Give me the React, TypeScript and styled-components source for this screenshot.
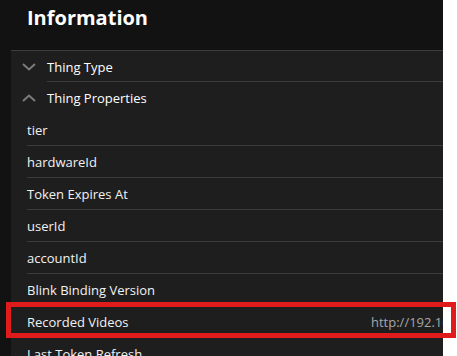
import styled, { createGlobalStyle } from 'styled-components';

const GlobalStyle = createGlobalStyle`
  html, body {
    margin: 0;
    padding: 0;
    background: #ffffff;
    overflow: hidden;
  }
  body {
    font-family: 'Open Sans', 'Noto Sans', sans-serif;
  }
`;

type Prop = {
  name: string;
  value?: string;
  highlighted?: boolean;
};

const properties: Prop[] = [
  { name: 'tier' },
  { name: 'hardwareId' },
  { name: 'Token Expires At' },
  { name: 'userId' },
  { name: 'accountId' },
  { name: 'Blink Binding Version' },
  { name: 'Recorded Videos', value: 'http://192.168.1.20:8080/videos', highlighted: true },
  { name: 'Last Token Refresh' },
];

const Chevron = ({ up }: { up?: boolean }) => (
  <ChevronSvg width="14" height="8" viewBox="0 0 14 8">
    <path
      d={up ? 'M1 7 L7 1.5 L13 7' : 'M1 1 L7 6.5 L13 1'}
      fill="none"
      stroke="#7c7c7c"
      strokeWidth="2"
    />
  </ChevronSvg>
);

const App = () => {
  return (
    <Screen>
      <GlobalStyle />
      <Title>Information</Title>
      <Panel>
        <Group>
          <Chevron />
          <GroupLabel>Thing Type</GroupLabel>
        </Group>
        <Group $open>
          <Chevron up />
          <GroupLabel>Thing Properties</GroupLabel>
        </Group>
        {properties.map((p) => (
          <Row key={p.name}>
            <Name>{p.name}</Name>
            <Value>{p.value}</Value>
            {p.highlighted && <Highlight />}
          </Row>
        ))}
      </Panel>
    </Screen>
  );
};

const Screen = styled.div`
  width: 443px;
  height: 356px;
  background-color: #121212;
  color: #ffffff;
`;

const Title = styled.h1`
  margin: 0;
  height: 50px;
  padding: 3px 0 0 27px;
  box-sizing: border-box;
  font-family: 'Open Sans', sans-serif;
  font-size: 20px;
  font-weight: 700;
  line-height: 30px;
  color: #ffffff;
`;

const Panel = styled.div`
  margin-left: 11px;
  height: 320px;
  background-color: #1e1e1e;
  border-top: 1px solid #3c3c3c;
  font-size: 13px;
`;

const Group = styled.div<{ $open?: boolean }>`
  display: flex;
  align-items: center;
  height: ${(p) => (p.$open ? '32px' : '31px')};
  padding-left: 11px;
  position: relative;
  &::after {
    content: ${(p) => (p.$open ? 'none' : "''")};
    position: absolute;
    left: 36px;
    right: 0;
    bottom: 0;
    height: 1px;
    background: #3c3c3c;
  }
`;

const ChevronSvg = styled.svg`
  flex: none;
  margin-right: 11px;
`;

const GroupLabel = styled.span`
  color: #ffffff;
`;

const Row = styled.div`
  display: grid;
  grid-template-columns: 344px 72px;
  align-items: center;
  height: 32px;
  box-sizing: border-box;
  margin-left: 16px;
  border-bottom: 1px solid #3c3c3c;
  position: relative;
`;

const Name = styled.span`
  color: #f2f2f2;
  white-space: nowrap;
`;

const Value = styled.span`
  color: #a6a6a6;
  white-space: nowrap;
  overflow: hidden;
`;

const Highlight = styled.div`
  position: absolute;
  left: -21px;
  top: -4px;
  width: 450px;
  height: 36px;
  box-sizing: border-box;
  border: 5px solid #e01b1b;
  pointer-events: none;
`;

export default App;
